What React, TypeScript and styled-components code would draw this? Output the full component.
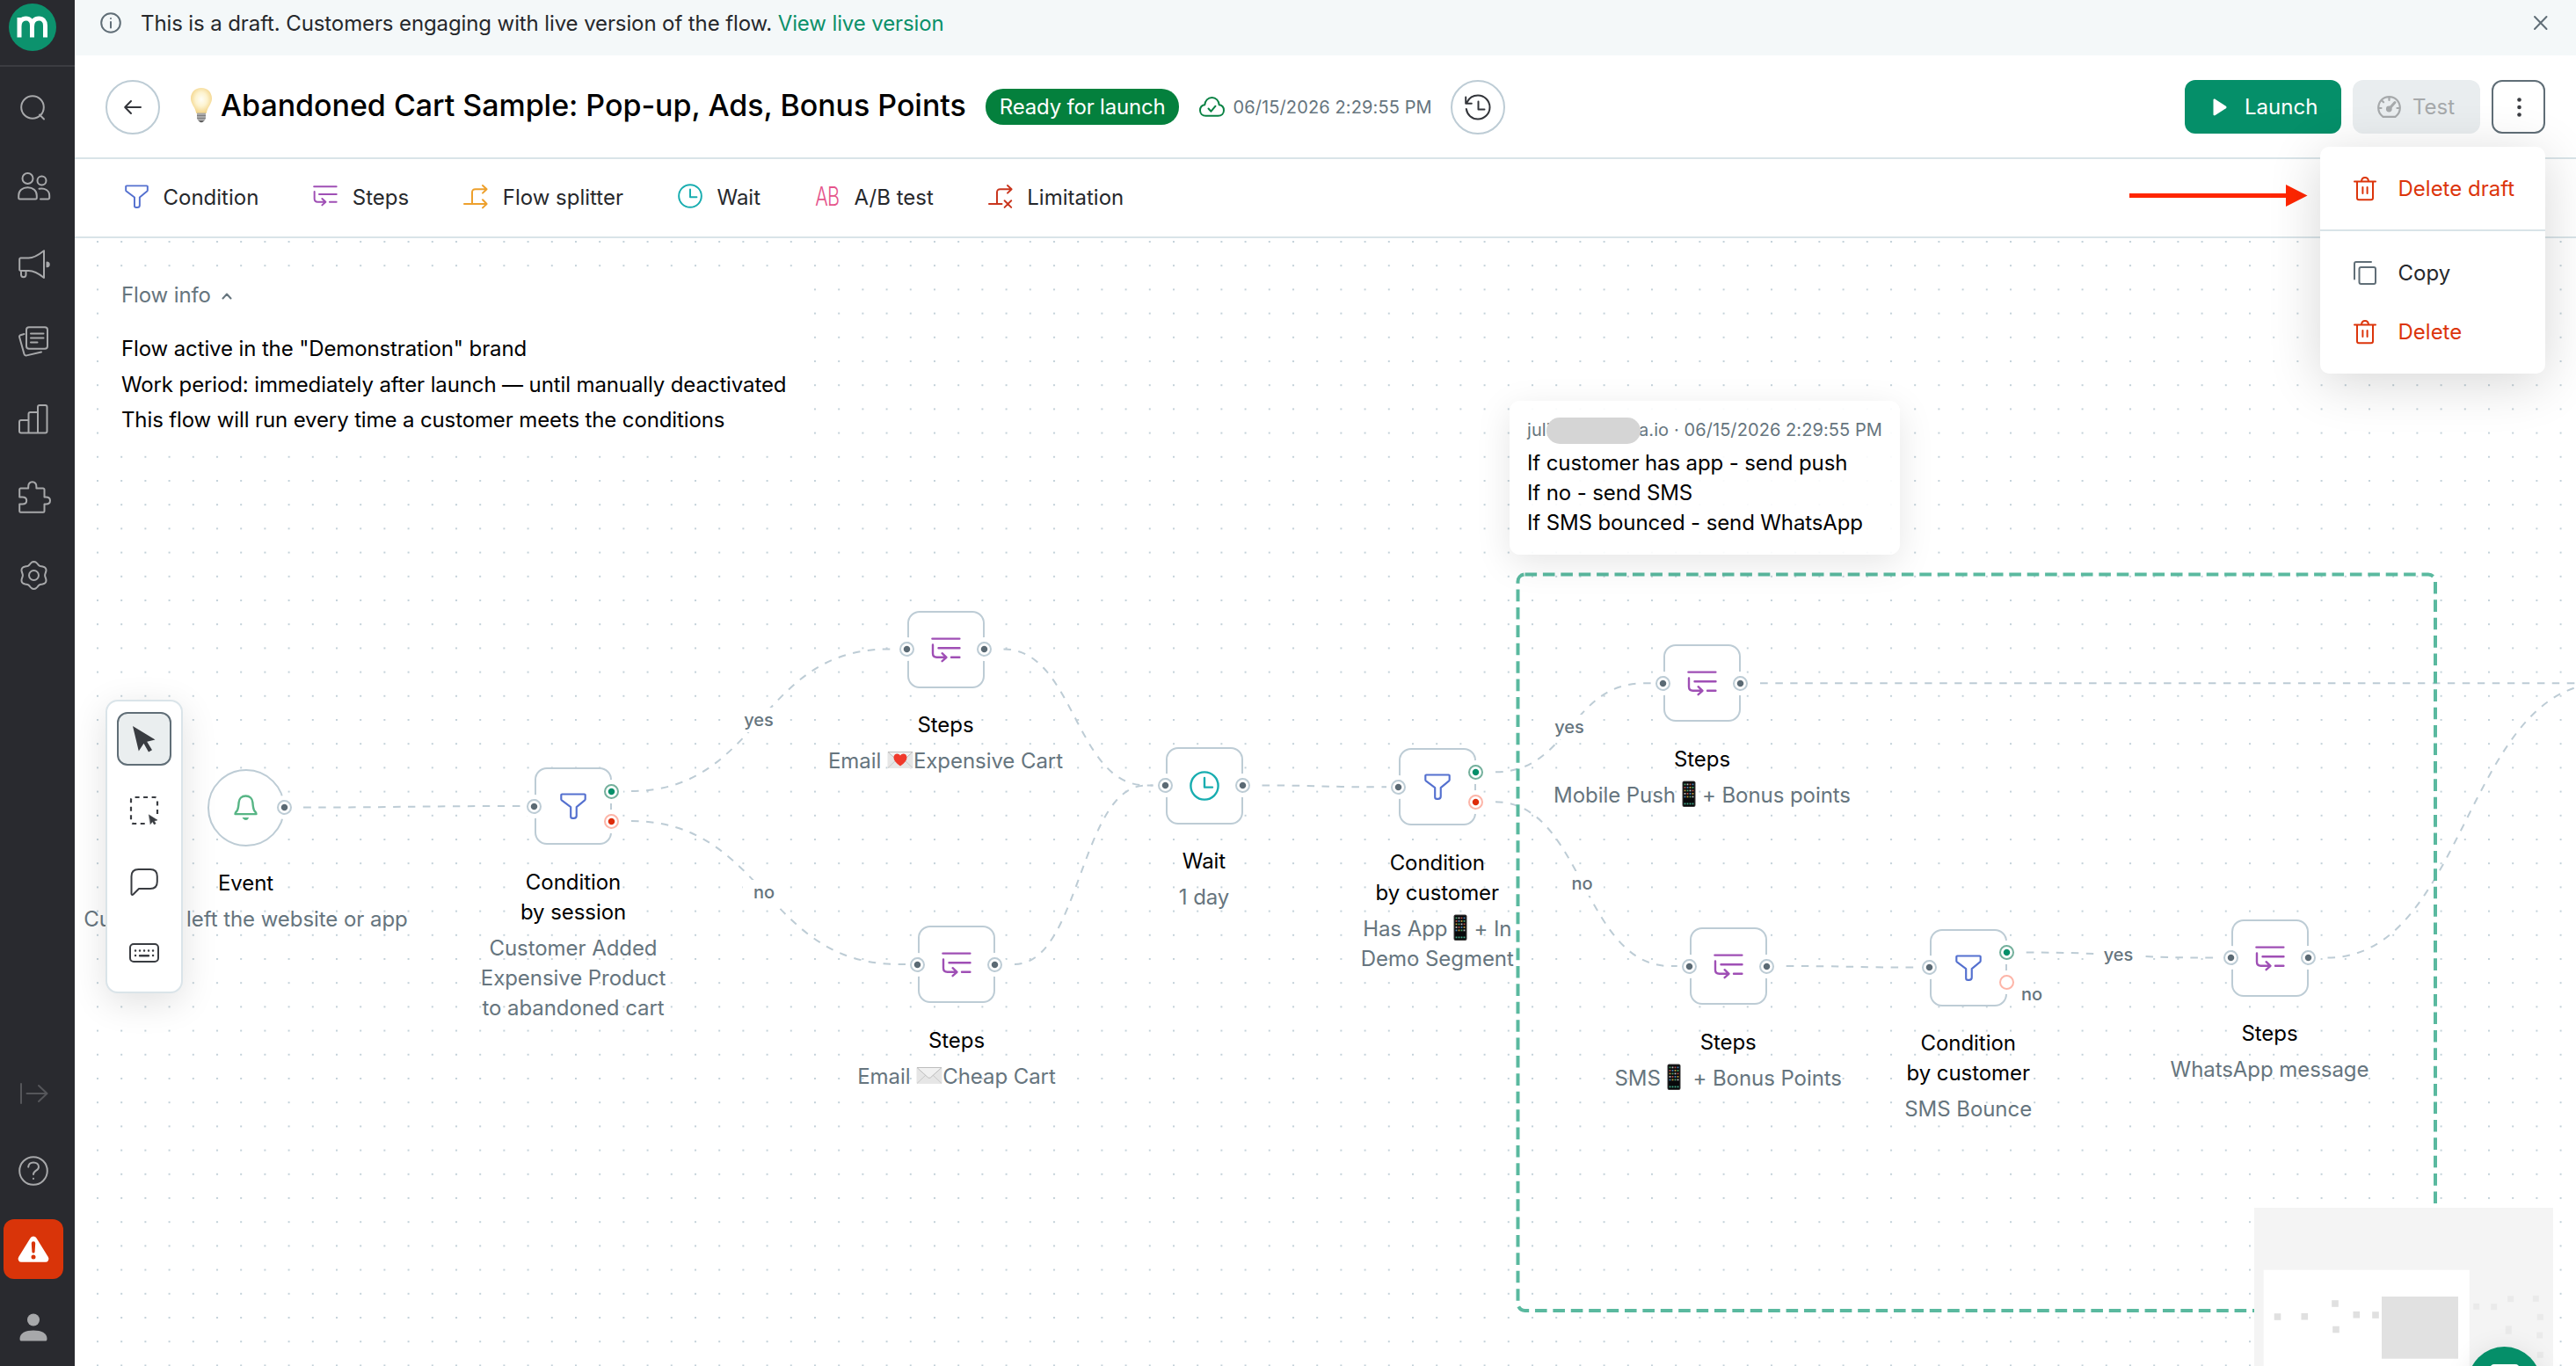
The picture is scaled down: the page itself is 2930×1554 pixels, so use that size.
import React from 'react';
import styled, { createGlobalStyle } from 'styled-components';

const GlobalStyle = createGlobalStyle`
  * { box-sizing: border-box; }

  html, body {
    margin: 0;
    padding: 0;
    overflow: hidden;
  }

  body {
    font-family: Inter, "Liberation Sans", sans-serif;
    font-size: 24px;
    color: #26282c;
    background: #fff;
  }

  svg { display: block; flex: none; overflow: visible; }
`;

/* ---------- colors ---------- */

const c = {
  dark: '#292a2f',
  side: '#a7a8aa',
  line: '#d9e4e8',
  stroke: '#bdccd5',
  slate: '#606e77',
  gray: '#66757e',
  green: '#058f69',
  red: '#dc350b',
  blue: '#5470cf',
  purple: '#9f4fb5',
  teal: '#18adb0',
};

/* ---------- icons ---------- */

interface IconProps {
  w: number;
  h: number;
  box?: string;
  color?: string;
  sw?: number;
  children: React.ReactNode;
}

const Icon: React.FC<IconProps> = ({ w, h, box, color = 'currentColor', sw = 2, children }) => (
  <svg
    width={w}
    height={h}
    viewBox={box || `0 0 ${w} ${h}`}
    fill="none"
    stroke={color}
    strokeWidth={sw}
    strokeLinecap="round"
    strokeLinejoin="round"
  >
    {children}
  </svg>
);

const FunnelIcon = ({ size = 30 }: { size?: number }) => (
  <Icon w={size} h={size} box="0 0 32 32" color={c.blue} sw={2.3}>
    <path d="M2.4 1.6h27.2a1 1 0 0 1 1 1v5.2a1.6 1.6 0 0 1-.6 1.2L20 17.2v10.6c0 1.8-1.4 3-3.4 3h-1.2c-2 0-2.4-.6-2.4-2V17.2L2 9a1.6 1.6 0 0 1-.6-1.2V2.6a1 1 0 0 1 1-1z" />
  </Icon>
);

const StepsIcon = ({ size = 34 }: { size?: number }) => (
  <Icon w={size} h={(size * 28) / 34} box="0 0 34 28" color={c.purple} sw={2.4}>
    <path d="M1.4 1.6h31M8.5 12.2h24M23 22.8h9.4M2 8.5v9.8c0 3 1.5 4.5 4.5 4.5H17M12.6 18.2l4.9 4.6-4.9 4.4" />
  </Icon>
);

const SplitIcon = () => (
  <Icon w={28} h={27} color="#eda02c">
    <path d="M1 22h25M22 17.3l4.6 4.7-4.6 4.4M10 22V9c0-2.6 1.2-3.8 3.8-3.8H26M22 1l4.6 4.2L22 9.6" />
  </Icon>
);

const LimitIcon = () => (
  <Icon w={28} h={27} color="#c9361e">
    <path d="M1 22h14.5M10 22V9c0-2.6 1.2-3.8 3.8-3.8H26M22 1l4.6 4.2L22 9.6M18.6 18.3l7.6 7.6M26.2 18.3l-7.6 7.6" />
  </Icon>
);

const ClockIcon = ({ size = 34 }: { size?: number }) => (
  <Icon w={size} h={size} box="0 0 34 34" color={c.teal} sw={2.4}>
    <circle cx="17" cy="17" r="15.6" />
    <path d="M17 8v10.6h9" />
  </Icon>
);

const BellIcon = () => (
  <Icon w={27} h={30} color="#57b585" sw={2.4}>
    <path d="M13.5 1.5c-4.6 0-7.6 3-7.9 7.4-.3 4.4-.7 7.1-1.7 8.9-.9 1.5-2.4 2.3-2.4 4.3h24c0-2-1.5-2.8-2.4-4.3-1-1.8-1.4-4.5-1.7-8.9-.3-4.4-3.3-7.4-7.9-7.4z" />
    <path d="M10.5 26.5h6c-.5 1.4-1.5 2-3 2s-2.5-.6-3-2z" fill="#57b585" strokeWidth="1" />
  </Icon>
);

const TrashIcon = () => (
  <Icon w={26} h={27} color={c.red}>
    <path d="M1 5.5h24M4 5.5v18.7a2 2 0 0 0 2 2h14a2 2 0 0 0 2-2V5.5M9 5c.3-2.6 1.6-4 4-4s3.7 1.4 4 4M10.4 12v7M15.6 12v7" />
  </Icon>
);

const CopyIcon = () => (
  <Icon w={26} h={27} color={c.slate}>
    <rect x="6.5" y="7" width="18.5" height="19" rx="2" />
    <path d="M1 20.5V3a2 2 0 0 1 2-2h17" />
  </Icon>
);

// cog outline: a circle with six soft bumps
const gearPath = () => {
  const pts: string[] = [];
  for (let i = 0; i < 72; i++) {
    const a = (i / 72) * Math.PI * 2;
    const r = 14.1 + 1.5 * Math.cos(6 * a);
    pts.push(`${(16.5 + r * Math.sin(a)).toFixed(2)} ${(16.5 - r * Math.cos(a)).toFixed(2)}`);
  }
  return `M${pts.join('L')}z`;
};

/* emoji drawn as small pictures, they sit in the text line */
const EmojiSvg = styled.svg`
  display: inline-block;
  vertical-align: -5px;
`;

const Letter = ({ heart }: { heart?: boolean }) => (
  <EmojiSvg width="30" height="30" viewBox="0 0 30 30">
    <rect x="0.5" y="6" width="29" height="19" rx="1" fill="#e6e6e6" />
    <path d="M1 24.5l10-9.5M29 24.5L19 15" stroke="#c9c9c9" fill="none" />
    <path d="M1 6.5l12.5 11.3q1.5 1.2 3 0L29 6.5z" fill="#f1f1f1" stroke="#bdbdbd" />
    {heart && (
      <path d="M15 22.5C10 19 7.500 16 7.5 12.7 7.5 8 13 7 15 10.5 17 7 22.5 8 22.5 12.7c0 3.3-2.5 6.3-7.5 9.8z" fill="#f0392b" />
    )}
  </EmojiSvg>
);

const appColors = ['#5fd08a', '#e8e8e8', '#e8665a', '#5aa8e8', '#f0c04a'];

const Phone = () => (
  <EmojiSvg width="30" height="30" viewBox="0 0 30 30">
    <rect x="7.5" y="0.5" width="15" height="29.5" rx="2" fill="#3c3c3c" />
    <rect x="8.5" y="1.5" width="13" height="27.5" rx="1" fill="#08090b" />
    {[3.5, 7, 10.5, 14, 17.5, 25.5].map((y, row) =>
      [9.6, 12.6, 15.6, 18.6].map((x, col) => (
        <rect key={`${x}-${y}`} x={x} y={y} width="1.8" height="1.8" fill={row === 5 ? '#4fd0a5' : appColors[(row * 2 + col) % 5]} opacity="0.8" />
      )),
    )}
  </EmojiSvg>
);

const Bulb = () => (
  <svg width="26" height="40" viewBox="0 0 26 40">
    <defs>
      <radialGradient id="glow" cx="0.5" cy="0.45" r="0.55">
        <stop offset="0" stopColor="#fffef6" />
        <stop offset="0.5" stopColor="#fdf3cf" />
        <stop offset="1" stopColor="#f3d488" />
      </radialGradient>
    </defs>
    <path d="M13 0C5.5 0 1 5.5 1 12c0 6.5 5 9.5 6.3 17h11.4C20 21.5 25 18.5 25 12 25 5.5 20.5 0 13 0z" fill="url(#glow)" />
    <path d="M8 28.5h10v6.5l-2 3q-3 2.5-6 0l-2-3z" fill="#a9a9a9" />
    <path d="M8 31.5h10M8.3 34.5h9.4" stroke="#7e7e7e" />
    <path d="M10 37.5h6q-3 3.5-6 0z" fill="#4e4e4e" />
  </svg>
);

/* ---------- page frame ---------- */

const Page = styled.div`
  position: relative;
  display: flex;
  width: 2930px;
  height: 1554px;
  overflow: hidden;
`;

const Sidebar = styled.nav`
  display: flex;
  flex-direction: column;
  width: 85px;
  background: ${c.dark};
  color: ${c.side};
`;

const LogoBox = styled.div`
  display: flex;
  height: 76px;
  padding: 4px 0 0 10px;
  border-bottom: 2px solid #3b3c41;
`;

const Logo = styled.div`
  display: flex;
  align-items: center;
  justify-content: center;
  width: 54px;
  height: 54px;
  border-radius: 50%;
  background: #0c926d;
  color: #fff;
`;

const SideItem = styled.div<{ $h?: number }>`
  display: flex;
  align-items: center;
  justify-content: center;
  width: 76px;
  height: ${(p) => p.$h || 88.5}px;
`;

const SideTop = styled.div`
  display: flex;
  flex-direction: column;
  padding-top: 3px;
  flex: 1;
`;

const SideBottom = styled.div`
  display: flex;
  flex-direction: column;
`;

const Alert = styled.div`
  display: flex;
  align-items: center;
  justify-content: center;
  width: 68px;
  height: 68px;
  margin: 11px 0 0 4px;
  border-radius: 12px;
  background: #d93409;
`;

const Main = styled.main`
  display: flex;
  flex-direction: column;
  flex: 1;
  min-width: 0;
`;

const Banner = styled.div`
  display: flex;
  align-items: flex-start;
  height: 63px;
  padding: 12px 33px 0 29px;
  background: #f4f8f9;
  line-height: 29px;
`;

const BannerText = styled.div`
  flex: 1;
  margin-left: 22px;
  letter-spacing: -0.11px;
  white-space: pre;
`;

const Link = styled.a`
  color: #0b9069;
`;

const Header = styled.header`
  display: flex;
  align-items: center;
  height: 118px;
  padding: 1px 35px 0;
  border-bottom: 2px solid ${c.line};
`;

const RoundButton = styled.button`
  display: flex;
  align-items: center;
  justify-content: center;
  width: 62px;
  height: 62px;
  padding: 0;
  border: 2px solid ${c.stroke};
  border-radius: 50%;
  background: #fff;
  color: #33353a;
`;

const Title = styled.h1`
  display: flex;
  align-items: center;
  gap: 9px;
  margin: 0 22px 3px 34px;
  font-size: 34px;
  font-weight: 500;
  letter-spacing: -0.04px;
  line-height: 44px;
  color: #000;
  white-space: nowrap;
`;

const Badge = styled.span`
  height: 41px;
  padding: 0 16px;
  border-radius: 20px;
  background: #04803d;
  color: #fff;
  letter-spacing: -0.2px;
  line-height: 41px;
`;

const Saved = styled.span`
  display: flex;
  align-items: center;
  gap: 9px;
  width: 266px;
  margin: 0 20px 0 23px;
  font-size: 20px;
  letter-spacing: 0.12px;
  color: ${c.gray};
  white-space: nowrap;
`;

const Actions = styled.div`
  display: flex;
  gap: 13px;
  margin-left: auto;
`;

const Button = styled.button<{ $kind: 'primary' | 'muted' | 'outline' }>`
  display: flex;
  align-items: center;
  height: 61px;
  border: 0;
  border-radius: 12px;
  font: inherit;
  ${(p) => p.$kind === 'primary' && `
    width: 178px; padding: 0 0 0 32px; gap: 20px;
    background: ${c.green}; color: #fff;
  `}
  ${(p) => p.$kind === 'muted' && `
    width: 145px; padding: 0 0 0 28px; gap: 13px;
    background: #e9edef; color: #a6a9ab;
  `}
  ${(p) => p.$kind === 'outline' && `
    width: 61px; padding: 0; justify-content: center;
    background: #fff; border: 2px solid ${c.slate}; color: #3b3d42;
  `}
`;

const Toolbar = styled.div`
  display: flex;
  align-items: center;
  gap: 60px;
  height: 90px;
  padding: 0 54px 2px;
  border-bottom: 2px solid ${c.line};
`;

const Tool = styled.div`
  display: flex;
  align-items: center;
  gap: 14.5px;
`;

const ToolIcon = styled.span`
  display: flex;
  align-items: center;
  justify-content: center;
  width: 32px;
  height: 32px;
  margin-top: -2px;
`;

const AB = styled.span`
  font-size: 30px;
  letter-spacing: -1px;
  font-weight: 300;
  color: #e5548b;
  transform: scaleX(0.72);
`;

/* ---------- canvas ---------- */

const Canvas = styled.section`
  position: relative;
  flex: 1;
  overflow: hidden;
  background: #fff;
`;

// the plane is panned so that node coordinates stay in flow space
const Plane = styled.div`
  position: absolute;
  left: -85px;
  top: -271px;
  width: 2930px;
  height: 1554px;
`;

const Wires = styled.svg`
  position: absolute;
  inset: 0;
`;

const Info = styled.div`
  position: absolute;
  left: 33px;
  top: 41px;
  width: 797px;
  height: 200px;
  padding: 9px 20px;
  background: #fff;
  color: #000;
  letter-spacing: -0.12px;
  line-height: 40.7px;
  white-space: nowrap;
`;

const InfoHead = styled.div`
  display: flex;
  align-items: center;
  gap: 12px;
  height: 31px;
  margin-bottom: 25px;
  color: ${c.gray};
`;

const NodeBox = styled.div<{ $x: number; $y: number }>`
  position: absolute;
  left: ${(p) => p.$x - 250}px;
  top: ${(p) => p.$y - 44}px;
  display: flex;
  flex-direction: column;
  align-items: center;
  width: 500px;
  letter-spacing: -0.06px;
  line-height: 34px;
  text-align: center;
`;

const Shape = styled.div<{ $round?: boolean }>`
  position: relative;
  display: flex;
  align-items: center;
  justify-content: center;
  width: 88px;
  height: 88px;
  margin-bottom: 25.5px;
  border: 2px solid ${c.stroke};
  border-radius: ${(p) => (p.$round ? '50%' : '14px')};
  background: #fff;
`;

const portColors = {
  plain: [c.stroke, '#5b6a74'],
  yes: ['#74b09c', '#058f69'],
  no: ['#fdb5a8', '#dd2c0a'],
};

const Port = styled.span<{ $side: 'left' | 'right'; $kind?: keyof typeof portColors; $dy?: number; $empty?: boolean }>`
  position: absolute;
  ${(p) => (p.$side === 'left' ? 'left: -11px' : 'right: -10px')};
  top: ${(p) => 33.5 + (p.$dy || 0)}px;
  width: 17px;
  height: 17px;
  border: 2px solid ${(p) => portColors[p.$kind || 'plain'][0]};
  border-radius: 50%;
  box-shadow: 0 0 0 5px #fff;
  background: ${(p) => p.$empty ? '#fff' : `radial-gradient(circle, ${portColors[p.$kind || 'plain'][1]} 3.2px, #fff 4.2px)`};
`;

const NodeTitle = styled.div`
  margin-bottom: 7px;
  color: #000;
  white-space: pre-line;
`;

const NodeText = styled.div`
  color: ${c.gray};
  white-space: pre-line;
`;

const EdgeLabel = styled.span<{ $x: number; $y: number; $bare?: boolean }>`
  position: absolute;
  left: ${(p) => p.$x - 24}px;
  top: ${(p) => p.$y - 14}px;
  width: 48px;
  height: 28px;
  background: ${(p) => (p.$bare ? 'none' : '#fff')};
  color: ${c.gray};
  font-size: 20px;
  font-weight: 500;
  line-height: 28px;
  text-align: center;
`;

const Note = styled.div`
  position: absolute;
  left: 1717px;
  top: 456px;
  width: 444px;
  height: 175px;
  padding: 18px 20px;
  border-radius: 12px;
  background: rgba(255, 255, 255, 0.9);
  box-shadow: 0 10px 40px rgba(0, 0, 0, 0.1);
  color: #000;
  letter-spacing: -0.12px;
  line-height: 34px;
  white-space: nowrap;
`;

const NoteMeta = styled.div`
  display: flex;
  align-items: center;
  height: 29px;
  margin-bottom: 7px;
  font-size: 20px;
  letter-spacing: 0.08px;
  color: ${c.gray};
`;

const Redacted = styled.span`
  position: relative;
  width: 108px;
  height: 30px;
  margin: 3px -2px 0 -5px;
  border-radius: 15px;
  background: #d5d5d5;
`;

const Palette = styled.div`
  position: absolute;
  left: 35px;
  top: 525px;
  display: flex;
  flex-direction: column;
  align-items: center;
  gap: 20.3px;
  width: 88px;
  height: 334px;
  padding-top: 12px;
  border: 2px solid #dae4e9;
  border-radius: 14px;
  background: #fff;
  box-shadow: 0 10px 40px rgba(0, 0, 0, 0.12);
  color: #393c41;
`;

const PaletteButton = styled.div<{ $active?: boolean }>`
  display: flex;
  align-items: center;
  justify-content: center;
  width: 62px;
  height: 61px;
  border: 2px solid ${(p) => (p.$active ? c.slate : 'transparent')};
  border-radius: 12px;
  background: ${(p) => (p.$active ? '#eaeeef' : 'none')};
`;

const MiniMap = styled.svg`
  position: absolute;
  left: 2479px;
  top: 1103px;
`;

const ChatButton = styled.div`
  position: absolute;
  left: 2722px;
  top: 1261px;
  display: flex;
  justify-content: center;
  width: 83px;
  height: 83px;
  padding-top: 20px;
  border-radius: 50%;
  background: ${c.green};
  box-shadow: 0 4px 30px rgba(0, 0, 0, 0.1);
`;

/* ---------- dropdown ---------- */

const Menu = styled.div`
  position: absolute;
  left: 2639px;
  top: 167px;
  width: 256px;
  height: 258px;
  border-radius: 10px;
  background: #fff;
  box-shadow: 0 10px 60px rgba(0, 0, 0, 0.16);
`;

const MenuGroup = styled.div`
  padding: 14px 0 13px;

  & + & {
    border-top: 2px solid ${c.line};
  }
`;

const MenuItem = styled.div<{ $danger?: boolean }>`
  display: flex;
  align-items: center;
  gap: 24.5px;
  height: 67px;
  padding-left: 38px;
  color: ${(p) => (p.$danger ? c.red : '#26282c')};
`;

const Pointer = styled.svg`
  position: absolute;
  left: 2422px;
  top: 210px;
`;

/* ---------- data ---------- */

type Kind = 'event' | 'steps' | 'condition' | 'wait';

interface FlowNode {
  kind: Kind;
  x: number;
  y: number;
  title: string;
  text: React.ReactNode;
  noEmpty?: boolean;
}

const nodes: FlowNode[] = [
  { kind: 'event', x: 279.5, y: 918.5, title: 'Event', text: 'Customer left the website or app' },
  { kind: 'condition', x: 652, y: 917, title: 'Condition\nby session', text: 'Customer Added\nExpensive Product\nto abandoned cart' },
  { kind: 'steps', x: 1075.5, y: 738.5, title: 'Steps', text: <>Email <Letter heart />Expensive Cart</> },
  { kind: 'steps', x: 1088, y: 1097, title: 'Steps', text: <>Email <Letter />Cheap Cart</> },
  { kind: 'wait', x: 1369.5, y: 893.5, title: 'Wait', text: '1 day' },
  { kind: 'condition', x: 1634.8, y: 895.3, title: 'Condition\nby customer', text: <>Has App<Phone />+ In{'\n'}Demo Segment</> },
  { kind: 'steps', x: 1936, y: 777.3, title: 'Steps', text: <>Mobile Push<Phone />+ Bonus points</> },
  { kind: 'steps', x: 1965.7, y: 1099, title: 'Steps', text: <>SMS<Phone /> + Bonus Points</> },
  { kind: 'condition', x: 2238.7, y: 1100.5, title: 'Condition\nby customer', text: 'SMS Bounce', noEmpty: true },
  { kind: 'steps', x: 2581.5, y: 1089.5, title: 'Steps', text: 'WhatsApp message' },
];

// [from x, from y, to x, to y] between port centers
const edges: number[][] = [
  [323, 918.5, 608, 917],
  [696, 900, 1031.5, 738.5],
  [696, 934, 1044, 1097],
  [1119.5, 738.5, 1325.5, 893.5],
  [1132, 1097, 1325.5, 893.5],
  [1413.5, 893.5, 1591, 895.3],
  [1679, 878.3, 1892, 777.3],
  [1679, 912.3, 1921.7, 1099],
  [1980, 777.3, 3000, 777.3],
  [2009.7, 1099, 2194.7, 1100.5],
  [2282.7, 1083.5, 2537.5, 1089.5],
  [2625.5, 1089.5, 2984, 777.3],
];

const labels: [string, number, number][] = [
  ['yes', 863, 819],
  ['no', 869, 1015],
  ['yes', 1785, 827],
  ['no', 1799.5, 1005],
  ['yes', 2409.5, 1086],
];

const edgePath = ([x1, y1, x2, y2]: number[]) => {
  const a = x1 + 22;
  const b = x2 - 22;
  const m = (a + b) / 2;
  return `M${a} ${y1}C${m} ${y1} ${m} ${y2} ${b} ${y2}h8`;
};

const nodeIcon: Record<Kind, React.ReactNode> = {
  event: <BellIcon />,
  steps: <StepsIcon />,
  condition: <FunnelIcon />,
  wait: <ClockIcon />,
};

const NodeView = ({ kind, x, y, title, text, noEmpty }: FlowNode) => (
  <NodeBox $x={x} $y={y}>
    <Shape $round={kind === 'event'}>
      {nodeIcon[kind]}
      {kind !== 'event' && <Port $side="left" />}
      {kind === 'condition' ? (
        <>
          <Port $side="right" $kind="yes" $dy={-17} />
          <Port $side="right" $kind="no" $dy={17} $empty={noEmpty} />
        </>
      ) : (
        <Port $side="right" />
      )}
    </Shape>
    <NodeTitle>{title}</NodeTitle>
    <NodeText>{text}</NodeText>
  </NodeBox>
);

const tools: [string, React.ReactNode][] = [
  ['Condition', <FunnelIcon size={27} />],
  ['Steps', <StepsIcon size={28} />],
  ['Flow splitter', <SplitIcon />],
  ['Wait', <ClockIcon size={28} />],
  ['A/B test', <AB>AB</AB>],
  ['Limitation', <LimitIcon />],
];

const miniInside = [[60.5, 158], [91.3, 157.7], [126, 143], [127, 172.5], [150.3, 155.7], [172, 156]];
const miniOutside = [[286.7, 146.3], [306.7, 146.7], [325.7, 137.7], [354.3, 137.3], [359.3, 158.3], [358.7, 179], [323.3, 173], [359.3, 201.3]];

/* ---------- app ---------- */

const App: React.FC = () => (
  <Page>
    <GlobalStyle />
    <Sidebar>
      <LogoBox>
        <Logo>
          <Icon w={36} h={26} sw={5}>
            <path d="M3 24.5V2M3 12c0-6 3-9 7.5-9s7 3 7 8v13.5M17.5 12c0-6 3-9 7.7-9s7.3 3 7.3 8v13.5" strokeLinecap="butt" />
          </Icon>
        </Logo>
      </LogoBox>
      <SideTop>
        <SideItem>
          <Icon w={31} h={30}>
            <circle cx="14" cy="14" r="12.800" />
            <path d="M22 22.5l5 5" />
          </Icon>
        </SideItem>
        <SideItem>
          <Icon w={37} h={32}>
            <circle cx="11.5" cy="7" r="6" />
            <circle cx="27.5" cy="9.5" r="5" />
            <path d="M1.2 29v-2.5c0-5.5 4.3-9.3 10.3-9.3s10.3 3.8 10.3 9.3V29a1.5 1.5 0 0 1-1.5 1.5H2.7A1.5 1.5 0 0 1 1.2 29zM24.5 18.8c6.5-1.3 11.7 2 11.7 7.7V29a1.5 1.5 0 0 1-1.5 1.5H26" />
          </Icon>
        </SideItem>
        <SideItem>
          <Icon w={34} h={33}>
            <path d="M2.5 9.5h9c6.5 0 12-4 17.5-8.3V32C23.5 27.5 18 24 11.5 24h-9a1.3 1.3 0 0 1-1.3-1.3V10.8a1.3 1.3 0 0 1 1.3-1.3zM3 24v4.5c0 2 1 2.7 2.8 2.7s2.7-.9 2.7-2.7V24" />
            <path d="M32.5 14.5c3 .5 3 4.3 0 4.800z" fill="currentColor" />
          </Icon>
        </SideItem>
        <SideItem>
          <Icon w={34} h={35}>
            <rect x="9" y="1.2" width="24" height="24.5" rx="3" />
            <path d="M14 8.5h14.5M14 13.5h14.5M14 18.5h7.5M6.5 9l-4.2 1.2a1.8 1.8 0 0 0-1.2 2.3l5.4 19.3a2.3 2.3 0 0 0 2.8 1.6L26 29.5" />
          </Icon>
        </SideItem>
        <SideItem>
          <Icon w={34} h={34}>
            <path d="M11.5 32.5V11a2 2 0 0 1 2-2H22M22 32.5V3a2 2 0 0 1 2-2h6.5a2 2 0 0 1 2 2v27.5a2 2 0 0 1-2 2H3a2 2 0 0 1-2-2V20a2 2 0 0 1 2-2h8.5" />
          </Icon>
        </SideItem>
        <SideItem>
          <Icon w={35} h={37}>
            <path d="M2.5 8.5h8.7V6.800c0-3 1.5-5.6 4.6-5.6s4.6 2.6 4.6 5.6v1.7H28a1.5 1.5 0 0 1 1.5 1.5v8.5h1.8c2.8 0 4.7 1.4 4.7 4s-1.9 4-4.7 4h-1.8V34.5a1.3 1.3 0 0 1-1.3 1.3H2.5a1.3 1.3 0 0 1-1.3-1.3v-8h3.3c2.8 0 4.7-1.4 4.7-4s-1.9-4-4.7-4H1.2V9.8a1.3 1.3 0 0 1 1.3-1.3z" />
          </Icon>
        </SideItem>
        <SideItem>
          <Icon w={33} h={33}>
            <path d={gearPath()} />
            <circle cx="16.5" cy="16.5" r="5.5" />
          </Icon>
        </SideItem>
      </SideTop>
      <SideBottom>
        <SideItem $h={88}>
          <Icon w={32} h={24} color="#55565a">
            <path d="M2 1v22M8.5 12H31M22 3l9.5 9-9.5 9" />
          </Icon>
        </SideItem>
        <SideItem $h={88}>
          <Icon w={34} h={34}>
            <circle cx="17" cy="17" r="15.8" />
            <path d="M11.2 12.6C11.5 9.3 13.7 7.5 17 7.5c3.6 0 6 2 6 5 0 4.6-6 3.8-6 8.5M17 25.8v.3" />
          </Icon>
        </SideItem>
        <Alert>
          <svg width="36" height="30" viewBox="0 0 36 30">
            <path d="M14.5 2.5a4 4 0 0 1 7 0l13.3 21.6a3.7 3.7 0 0 1-3.2 5.7H4.4a3.7 3.7 0 0 1-3.2-5.7z" fill="#fff" />
            <path d="M15.8 8.5a2.2 2.2 0 0 1 4.4 0l-.6 9.5a1.6 1.6 0 0 1-3.2 0z" fill="#d93409" />
            <circle cx="18" cy="24" r="2.5" fill="#d93409" />
          </svg>
        </Alert>
        <SideItem $h={99}>
          <svg width="32" height="42" viewBox="0 -10 32 42" fill="currentColor">
            <circle cx="16" cy="7.5" r="7" />
            <path d="M.5 29c0-6.5 6.5-9.5 15.5-9.5S31.5 22.5 31.5 29c0 2-.8 2.5-2 2.5h-27C1.3 31.5.5 31 .5 29z" />
          </svg>
        </SideItem>
      </SideBottom>
    </Sidebar>

    <Main>
      <Banner>
        <Icon w={24} h={27} color={c.slate}>
          <circle cx="12" cy="14" r="10.8" />
          <path d="M12 13v6.5M12 9v.1" />
        </Icon>
        <BannerText>
          This is a draft. Customers engaging with live version of the flow. <Link>View live version</Link>
        </BannerText>
        <Icon w={15} h={27} color={c.slate}>
          <path d="M1 7l13.5 14M14.5 7L1 21" />
        </Icon>
      </Banner>

      <Header>
        <RoundButton>
          <Icon w={20} h={16}>
            <path d="M19 8H1.5M8 1L1.2 8 8 15" />
          </Icon>
        </RoundButton>
        <Title><Bulb />Abandoned Cart Sample: Pop-up, Ads, Bonus Points</Title>
        <Badge>Ready for launch</Badge>
        <Saved>
          <Icon w={29} h={23} color="#0a8244">
            <path d="M7.5 21.8C3.5 21.8 1 19 1 15.5c0-3.3 2.2-5.7 5.3-6.2C6.6 4.5 10 1 14.5 1s7.9 3.5 8.2 8.3c3.1.5 5.3 2.9 5.3 6.2 0 3.5-2.5 6.3-6.5 6.3zM10.5 13.5l3 3.2 5-6" />
          </Icon>
          06/15/2026 2:29:55 PM
        </Saved>
        <RoundButton>
          <Icon w={30} h={30}>
            <path d="M1.8 17C2.8 23.5 8 28.5 15 28.5c7.5 0 13.5-6 13.5-13.5S22.5 1.5 15 1.5C9.5 1.5 5 4.5 2.8 9M1.2 3.5v7.3h6.6M15.5 8.5V17.5h7" />
          </Icon>
        </RoundButton>
        <Actions>
          <Button $kind="primary">
            <svg width="16" height="20" viewBox="0 0 16 20">
              <path d="M.5 2v16c0 1.5 1.2 1.8 2.3 1.1l12-7.8c.9-.6.9-2 0-2.6L2.8.9C1.7.2.5.5.5 2z" fill="#fff" />
            </svg>
            Launch
          </Button>
          <Button $kind="muted">
            <Icon w={27} h={25} sw={2.2}>
              <path d="M6.5 23.8h14c3.3-2.3 5.3-5.8 5.3-10C25.8 6.5 20.5 1.2 13.5 1.2S1.2 6.5 1.2 13.8c0 4.2 2 7.700 5.3 10zM13.5 2v3M5.5 5.700l1.6 1.6M2 14h2.5M22.5 14H25" />
              <path d="M14 14.3L20 7.5" strokeWidth="3" />
              <circle cx="13.3" cy="15" r="2.3" fill="currentColor" />
            </Icon>
            Test
          </Button>
          <Button $kind="outline">
            <svg width="6" height="24" viewBox="0 0 6 24" fill="currentColor">
              <circle cx="3.500" cy="3.5" r="2.3" />
              <circle cx="3.500" cy="12" r="2.3" />
              <circle cx="3.500" cy="20.5" r="2.3" />
            </svg>
          </Button>
        </Actions>
      </Header>

      <Toolbar>
        {tools.map(([name, icon]) => (
          <Tool key={name}>
            <ToolIcon>{icon}</ToolIcon>
            {name}
          </Tool>
        ))}
      </Toolbar>

      <Canvas>
        <Plane>
          <Wires width="2930" height="1554" fill="none">
            <defs>
              <pattern id="dots" x="110" y="274" width="27.2" height="27.2" patternUnits="userSpaceOnUse">
                <rect width="2" height="2" fill="#c3d1d9" />
              </pattern>
            </defs>
            <rect width="2930" height="1554" fill="url(#dots)" />
            <g stroke={c.stroke} strokeWidth="2" strokeDasharray="8.5 8.5">
              {edges.map((e) => <path key={e.join()} d={edgePath(e)} />)}
            </g>
            <rect x="1726.5" y="653.5" width="1043.5" height="837.5" rx="8" stroke="#5ab99f" strokeWidth="4" strokeDasharray="13.6 6.8" />
          </Wires>
          {labels.map(([text, x, y]) => <EdgeLabel key={`${x}-${y}`} $x={x} $y={y}>{text}</EdgeLabel>)}
          {nodes.map((n) => <NodeView key={`${n.x}-${n.y}`} {...n} />)}
          <EdgeLabel $x={2311} $y={1131} $bare>no</EdgeLabel>
          <Note>
            <NoteMeta>juli<Redacted />a.io · 06/15/2026 2:29:55 PM</NoteMeta>
            <div>If customer has app - send push</div>
            <div>If no - send SMS</div>
            <div>If SMS bounced - send WhatsApp</div>
          </Note>
        </Plane>

        <Info>
          <InfoHead>
            Flow info
            <Icon w={12} h={8} color={c.gray}><path d="M1.5 6.5L6 1.5l4.5 5" /></Icon>
          </InfoHead>
          <div>Flow active in the "Demonstration" brand</div>
          <div>Work period: immediately after launch — until manually deactivated</div>
          <div>This flow will run every time a customer meets the conditions</div>
        </Info>

        <Palette>
          <PaletteButton $active>
            <svg width="26" height="30" viewBox="0 0 26 30">
              <path d="M0 0l25.5 15.5-9.3 2.2 5.8 9.5-4 2.3-5.5-9.7-5.7 8.700z" fill="#393c41" />
            </svg>
          </PaletteButton>
          <PaletteButton>
            <Icon w={32} h={32} sw={2.2}>
              <path d="M31 20V4a3 3 0 0 0-3-3H4a3 3 0 0 0-3 3v24a3 3 0 0 0 3 3h16" strokeDasharray="5 4.5" strokeLinecap="butt" />
              <path d="M21.5 21l9.5 6-3.6.9 1.8 3-1.9 1-1.8-3.2-2.3 2.8z" fill="currentColor" strokeWidth="0.5" />
            </Icon>
          </PaletteButton>
          <PaletteButton>
            <Icon w={32} h={31}>
              <path d="M1.5 9c0-5 3-8 8-8H23c5 0 7.8 3 7.8 8v6c0 5-2.8 8-7.8 8H10l-6.5 6.5c-1 .8-2 .4-2-1z" />
            </Icon>
          </PaletteButton>
          <PaletteButton>
            <Icon w={34} h={22}>
              <rect x="1" y="1" width="32" height="20" rx="4" />
              <path d="M7 8.5h.1M12 8.5h.1M17 8.5h.1M22 8.5h.1M27 8.5h.1M7 14h.1M12 14.3h10M27 14h.1" strokeWidth="2.4" />
            </Icon>
          </PaletteButton>
        </Palette>

        <MiniMap width="340" height="180" viewBox="34 34 340 180">
          <rect x="34" y="34" width="340" height="180" fill="#f4f4f4" />
          <rect x="44.7" y="104.7" width="234" height="110" fill="#fff" />
          <rect x="179" y="135" width="87" height="70.7" fill="#e1e1e1" />
          {miniInside.map(([x, y]) => <rect key={x} x={x - 3.8} y={y - 3.8} width="7.6" height="7.6" fill="#e0e0e0" />)}
          {miniOutside.map(([x, y], i) => (
            <rect key={i} x={x - 3.5} y={y - (i === 6 ? 4.7 : 3.5)} width="7" height={i === 6 ? 9.4 : 7} fill="#eaeaea" />
          ))}
        </MiniMap>

        <ChatButton>
          <svg width="34" height="40" viewBox="0 0 34 40"><rect width="34" height="30" rx="5" fill="#fff" /></svg>
        </ChatButton>
      </Canvas>
    </Main>

    <Pointer width="203" height="25" viewBox="0 0 203 25" fill="#ff2600">
      <path d="M0 10h178V0l24.5 12.5L178 25V15H0z" />
    </Pointer>

    <Menu>
      <MenuGroup>
        <MenuItem $danger><TrashIcon />Delete draft</MenuItem>
      </MenuGroup>
      <MenuGroup>
        <MenuItem><CopyIcon />Copy</MenuItem>
        <MenuItem $danger><TrashIcon />Delete</MenuItem>
      </MenuGroup>
    </Menu>
  </Page>
);

export default App;
